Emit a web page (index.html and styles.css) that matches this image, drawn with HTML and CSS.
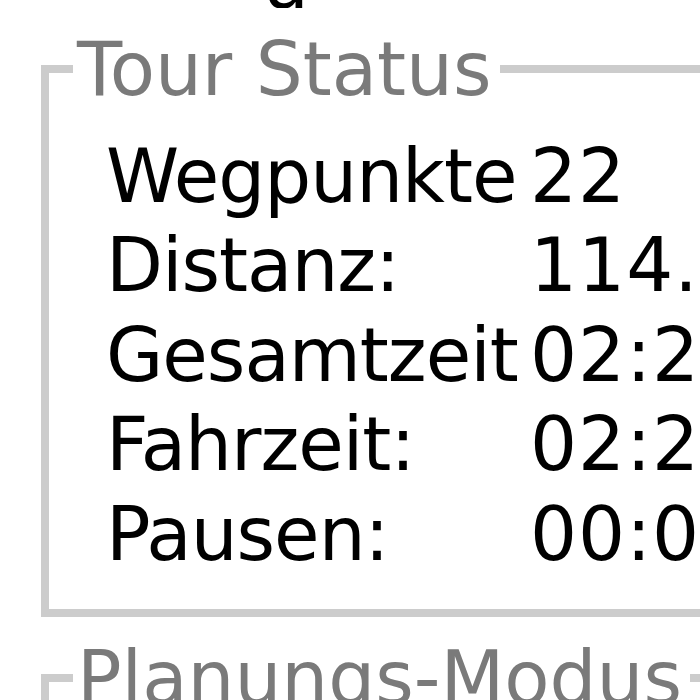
FILE: index.html
```html
<!DOCTYPE html>
<html lang="de">
<head>
    <meta charset="UTF-8">
    <title>Tour Status</title>
    <link rel="stylesheet" href="styles.css">
</head>
<body>
    <div class="clip-top"><span>u</span></div>

    <fieldset class="group">
        <legend>Tour Status</legend>
        <div class="stats">
            <span class="lbl">Wegpunkte</span><span class="val">22</span>
            <span class="lbl">Distanz:</span><span class="val">114.5 km</span>
            <span class="lbl">Gesamtzeit</span><span class="val">02:25:10</span>
            <span class="lbl">Fahrzeit:</span><span class="val">02:25:10</span>
            <span class="lbl">Pausen:</span><span class="val">00:00:00</span>
        </div>
    </fieldset>

    <fieldset class="group second">
        <legend>Planungs-Modus</legend>
        <div class="stats">
            <span class="lbl">Modus:</span><span class="val">Auto</span>
        </div>
    </fieldset>
</body>
</html>
```
FILE: styles.css
```css
html, body {
    margin: 0;
    overflow: hidden;
    background: #fff;
}
body {
    width: 700px;
    height: 700px;
    font-family: "DejaVu Sans", Verdana, sans-serif;
    font-size: 74px;
    color: #000;
}
.clip-top {
    height: 8px;
    overflow: hidden;
    display: flex;
    align-items: flex-end;
    padding-left: 262px;
}
.clip-top span {
    line-height: 0.69;
}
.group {
    margin: 21px 0 0 41px;
    width: 900px;
    border: 8px solid #ccc;
    padding: 23px 0 30px 24px;
    box-sizing: border-box;
}
.group legend {
    padding: 0 8px 0 4px;
    line-height: 80px;
    color: #7a7a7a;
}
.group.second {
    margin-top: 21px;
}
.stats {
    display: grid;
    grid-template-columns: 424px auto;
    margin-left: 33px;
    line-height: 89.4px;
}
.lbl {
    overflow: hidden;
    white-space: nowrap;
    letter-spacing: -1px;
}
.val {
    white-space: nowrap;
    letter-spacing: 1px;
}
```
